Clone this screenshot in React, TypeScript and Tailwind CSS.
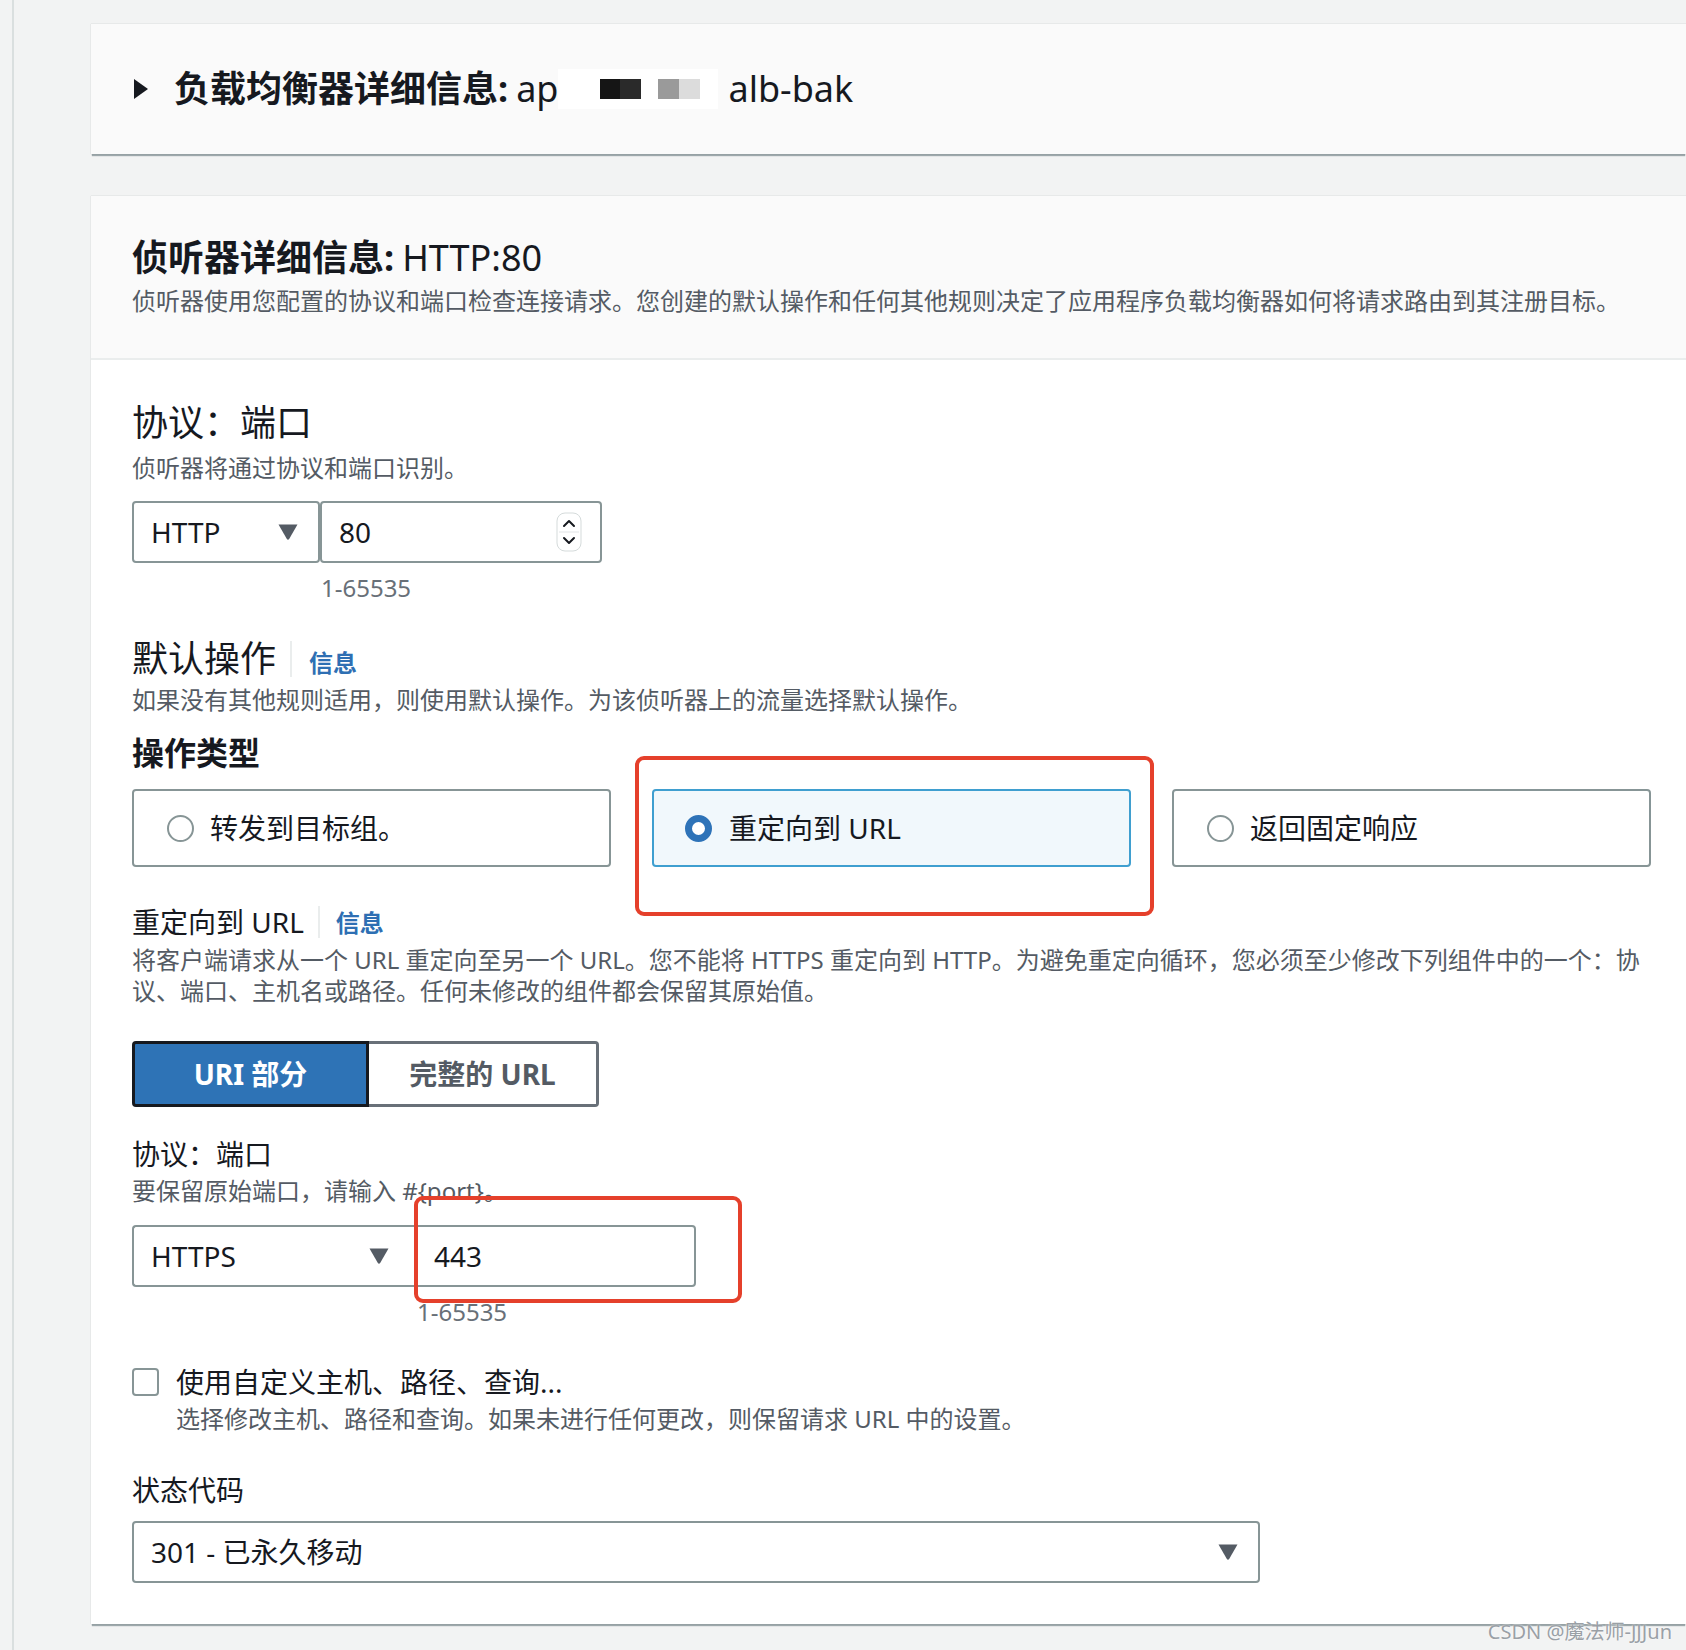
import React from "react";

const Caret = ({ className = "" }: { className?: string }) => (
  <svg width="22" height="18" viewBox="0 0 22 18" className={className}>
    <path d="M1.5 1.5 H20.5 L12.3 15.8 Q11 17.6 9.7 15.8 Z" fill="#545b64" />
  </svg>
);

const Spinner = () => (
  <svg width="26" height="40" viewBox="0 0 26 40">
    <rect x="1" y="1" width="24" height="38" rx="8" fill="#fff" stroke="#d5dbdb" strokeWidth="1" />
    <line x1="3" y1="20" x2="23" y2="20" stroke="#e1e4e6" strokeWidth="1" />
    <path d="M8 14 L13 9 L18 14" fill="none" stroke="#16191f" strokeWidth="2" strokeLinecap="round" strokeLinejoin="round" />
    <path d="M8 26 L13 31 L18 26" fill="none" stroke="#16191f" strokeWidth="2" strokeLinecap="round" strokeLinejoin="round" />
  </svg>
);

const Radio = ({ checked }: { checked?: boolean }) =>
  checked ? (
    <span className="inline-block w-[27px] h-[27px] rounded-full border-[7px] border-[#2e73b8] bg-white shrink-0" />
  ) : (
    <span className="inline-block w-[27px] h-[27px] rounded-full border-2 border-[#879596] bg-white shrink-0" />
  );

export default function App() {
  return (
    <div className="w-[1686px] h-[1650px] overflow-hidden bg-[#f2f3f3] flex font-['Noto_Sans','Noto_Sans_CJK_SC',sans-serif] text-[#16191f] relative">
      <div className="w-[14px] shrink-0 border-r-2 border-[#dadfdf]" />
      <div className="flex-1 pl-[77px] pt-[24px] flex flex-col">
        {/* Card 1 */}
        <div className="h-[130px] bg-[#fafafa] shadow-[0_3px_1px_-1px_rgba(0,28,36,0.35),0_0_1px_rgba(0,28,36,0.25)] flex items-center pl-[41px]">
          <svg width="18" height="24" viewBox="0 0 18 24" className="mr-[24px]">
            <path d="M2 2 L16 12 L2 22 Z" fill="#16191f" />
          </svg>
          <div className="text-[36px] leading-[44px] flex items-center whitespace-nowrap">
            <span className="font-bold">负载均衡器详细信息:</span>
            <span className="ml-[8px]">ap</span>
            <span className="inline-flex items-center h-[40px] bg-white w-[160px]">
              <span className="w-[42px]" />
              <span className="w-[20px] h-[20px] bg-[#151515]" />
              <span className="w-[21px] h-[20px] bg-[#2a2a2a]" />
              <span className="w-[17px] h-[20px] bg-white" />
              <span className="w-[21px] h-[20px] bg-[#9a9a9a]" />
              <span className="w-[21px] h-[20px] bg-[#dcdcdc]" />
            </span>
            <span className="ml-[10px]">alb-bak</span>
          </div>
        </div>

        {/* Card 2 */}
        <div className="mt-[42px] bg-white shadow-[0_3px_1px_-1px_rgba(0,28,36,0.35),0_0_1px_rgba(0,28,36,0.25)] flex flex-col">
          <div className="bg-[#fafafa] border-b-2 border-[#eaeded] pl-[41px] pt-[40px] pb-[41px]">
            <div className="text-[36px] leading-[44px] whitespace-nowrap">
              <span className="font-bold">侦听器详细信息:</span>
              <span className="ml-[8px]">HTTP:80</span>
            </div>
            <div className="mt-[5px] text-[24px] leading-[32px] text-[#545b64] whitespace-nowrap">
              侦听器使用您配置的协议和端口检查连接请求。您创建的默认操作和任何其他规则决定了应用程序负载均衡器如何将请求路由到其注册目标。
            </div>
          </div>

          <div className="pl-[41px] pb-[41px] pr-[35px] flex flex-col">
            <div className="mt-[41px] text-[36px] leading-[44px]">协议：端口</div>
            <div className="mt-[7px] text-[24px] leading-[32px] text-[#545b64]">侦听器将通过协议和端口识别。</div>

            <div className="mt-[17px] flex">
              <div className="w-[188px] h-[62px] border-2 border-[#879596] rounded-[4px] flex items-center justify-between pl-[17px] pr-[19px] text-[28px]">
                <span>HTTP</span>
                <Caret />
              </div>
              <div className="w-[282px] h-[62px] border-2 border-[#879596] rounded-[4px] flex items-center justify-between pl-[17px] pr-[18px] text-[28px]">
                <span>80</span>
                <Spinner />
              </div>
            </div>
            <div className="mt-[9px] ml-[189px] text-[24px] leading-[32px] text-[#687078]">1-65535</div>

            <div className="mt-[33px] flex items-center h-[44px]">
              <span className="text-[36px] leading-[44px]">默认操作</span>
              <span className="ml-[14px] w-[2px] h-[36px] bg-[#eaeded]" />
              <span className="ml-[17px] translate-y-[4px] text-[24px] leading-[32px] font-bold text-[#2e6fb3]">信息</span>
            </div>
            <div className="mt-[3px] text-[24px] leading-[32px] text-[#545b64]">如果没有其他规则适用，则使用默认操作。为该侦听器上的流量选择默认操作。</div>

            <div className="mt-[17px] text-[32px] leading-[40px] font-bold">操作类型</div>

            <div className="mt-[16px] flex gap-[41px] relative">
              <div className="w-[479px] h-[78px] border-2 border-[#879596] rounded-[4px] flex items-center pl-[33px] text-[28px]">
                <Radio />
                <span className="ml-[16px]">转发到目标组。</span>
              </div>
              <div className="w-[479px] h-[78px] border-2 border-[#3f9fd0] bg-[#f1f8fc] rounded-[4px] flex items-center pl-[31px] text-[28px]">
                <Radio checked />
                <span className="ml-[17px]">重定向到 URL</span>
              </div>
              <div className="w-[479px] h-[78px] border-2 border-[#879596] rounded-[4px] flex items-center pl-[33px] text-[28px]">
                <Radio />
                <span className="ml-[16px]">返回固定响应</span>
              </div>
              <div className="absolute left-[503px] top-[-33px] w-[519px] h-[160px] border-[4px] border-[#e5402b] rounded-[9px] pointer-events-none" />
            </div>

            <div className="mt-[37px] flex items-center h-[36px]">
              <span className="text-[28px] leading-[36px]">重定向到 URL</span>
              <span className="ml-[14px] w-[2px] h-[32px] bg-[#eaeded]" />
              <span className="ml-[16px] translate-y-[1px] text-[24px] leading-[32px] font-bold text-[#2e6fb3]">信息</span>
            </div>
            <div className="mt-[4px] text-[24px] leading-[31px] text-[#545b64] w-[1510px]">
              将客户端请求从一个 URL 重定向至另一个 URL。您不能将 HTTPS 重定向到 HTTP。为避免重定向循环，您必须至少修改下列组件中的一个：协议、端口、主机名或路径。任何未修改的组件都会保留其原始值。
            </div>

            <div className="mt-[35px] flex">
              <div className="w-[237px] h-[66px] bg-[#2e73b6] border-[3px] border-[#16191f] rounded-l-[4px] flex items-center justify-center text-white font-bold text-[28px]">
                URI 部分
              </div>
              <div className="w-[230px] h-[66px] bg-white border-y-[3px] border-r-[3px] border-[#687078] rounded-r-[4px] flex items-center justify-center text-[#545b64] font-bold text-[28px]">
                完整的 URL
              </div>
            </div>

            <div className="mt-[29px] text-[28px] leading-[36px]">协议：端口</div>
            <div className="mt-[3px] text-[24px] leading-[32px] text-[#545b64]">要保留原始端口，请输入 #{"{port}"}。</div>

            <div className="mt-[18px] flex relative">
              <div className="w-[283px] h-[62px] border-2 border-[#879596] border-r-0 rounded-l-[4px] flex items-center justify-between pl-[17px] pr-[25px] text-[28px]">
                <span>HTTPS</span>
                <Caret />
              </div>
              <div className="w-[281px] h-[62px] border-2 border-[#879596] rounded-r-[4px] flex items-center pl-[17px] text-[28px]">
                <span>443</span>
              </div>
              <div className="absolute left-[282px] top-[-29px] w-[328px] h-[107px] border-[4px] border-[#e5402b] rounded-[9px] pointer-events-none" />
            </div>
            <div className="mt-[9px] ml-[285px] text-[24px] leading-[32px] text-[#687078]">1-65535</div>

            <div className="mt-[36px] flex items-center">
              <span className="w-[27px] h-[28px] border-2 border-[#879596] rounded-[4px] bg-white" />
              <span className="ml-[17px] text-[28px] leading-[36px]">使用自定义主机、路径、查询...</span>
            </div>
            <div className="mt-[3px] ml-[44px] text-[24px] leading-[32px] text-[#545b64]">选择修改主机、路径和查询。如果未进行任何更改，则保留请求 URL 中的设置。</div>

            <div className="mt-[37px] text-[28px] leading-[36px]">状态代码</div>
            <div className="mt-[13px] w-[1128px] h-[62px] border-2 border-[#879596] rounded-[4px] flex items-center justify-between pl-[17px] pr-[19px] text-[28px]">
              <span>301 - 已永久移动</span>
              <Caret />
            </div>
          </div>
        </div>
      </div>
      <div className="absolute right-[14px] bottom-[6px] text-[20px] leading-[24px] text-[#9aa0a6] [text-shadow:0_0_2px_#fff]">
        CSDN @魔法师-JJJun
      </div>
    </div>
  );
}
